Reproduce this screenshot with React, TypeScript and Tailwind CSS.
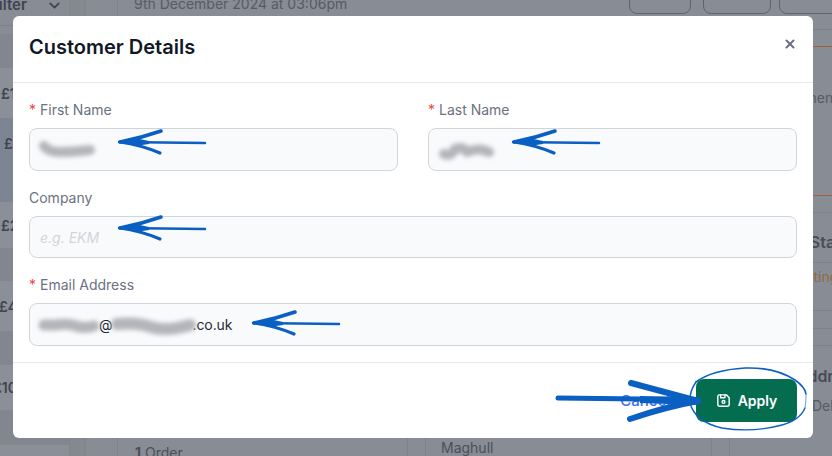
import React from 'react';
import { ChevronDown, X } from 'lucide-react';
import { TbDeviceFloppy } from 'react-icons/tb';

const Smudge = ({ d, width, height = 14, tone = '#b3b5ba', stroke = 8 }: { d: string; width: number; height?: number; tone?: string; stroke?: number }) => (
  <svg width={width} height={height} viewBox={`0 0 ${width} ${height}`} className="shrink-0 overflow-visible blur-[2px]">
    <path d={d} fill="none" stroke={tone} strokeWidth={stroke} strokeLinecap="round" strokeLinejoin="round" />
  </svg>
);

const Field = ({ label, required, height = 43, children }: { label: string; required?: boolean; height?: number; children: React.ReactNode }) => (
  <div className="flex flex-col">
    <label className="mb-[8px] h-[20px] text-[14px] leading-[20px] text-[#6b7280]">
      {required && <span className="mr-[4px] text-[#ef4444]">*</span>}
      {label}
    </label>
    <div style={{ height }} className="flex items-center rounded-[8px] border border-[#d1d5db] bg-[#f9fafb] px-[10px] text-[14px] text-[#1f2937]">
      {children}
    </div>
  </div>
);

const SmallArrow = ({ x, y }: { x: number; y: number }) => (
  <g transform={`translate(${x} ${y})`}>
    <path d="M0 0 L86 1" stroke="#0a5fc2" strokeWidth="2.4" strokeLinecap="round" fill="none" />
    <path d="M1 0 Q22 -4 42 -11" stroke="#0a5fc2" strokeWidth="3.6" strokeLinecap="round" fill="none" />
    <path d="M1 0 Q22 3 41 11" stroke="#0a5fc2" strokeWidth="3.2" strokeLinecap="round" fill="none" />
    <path d="M0 0 L16 -4 L30 -1 L30 2 L16 4 Z" fill="#0a5fc2" />
  </g>
);

const App = () => {
  return (
    <div className="relative flex h-[456px] w-[832px] overflow-hidden bg-[#888c94] font-['Inter',sans-serif]">
      {/* page behind the dialog */}
      <div className="flex w-[70px] shrink-0 flex-col border-r border-[#7f838b] text-[14px] font-semibold text-[#3f4450]">
        <div className="flex h-[26px] items-start justify-between overflow-hidden border-b border-[#7d8189] pr-[6px] leading-[10px]">
          <span className="-ml-[10px] whitespace-nowrap text-[15px]">Filter</span>
          <ChevronDown size={17} strokeWidth={2.5} className="-mt-[3px] text-[#3f4450]" />
        </div>
        <div className="h-[8px]" />
        <div className="h-[34px] bg-[#82868e]" />
        <div className="flex h-[50px] items-center overflow-hidden bg-[#8b8f97] pl-[1px]">£1</div>
        <div className="flex h-[84px] items-center overflow-hidden bg-[#7d8494] pb-[34px] pl-[4px]">£1</div>
        <div className="flex h-[46px] items-center overflow-hidden bg-[#8b8f97] pl-[1px]">£2</div>
        <div className="h-[33px] bg-[#82868e]" />
        <div className="flex h-[50px] items-center overflow-hidden bg-[#8b8f97] -ml-[1px]">£4</div>
        <div className="h-[34px] bg-[#82868e]" />
        <div className="flex h-[45px] items-center overflow-hidden bg-[#8b8f97] -ml-[7px]">£10</div>
        <div className="h-[35px] bg-[#82868e]" />
        <div className="flex-1 bg-[#8b8f97]" />
      </div>
      <div className="w-[16px] shrink-0 border-r border-[#7f838b] bg-[#85898f]" />
      <div className="w-[32px] shrink-0 border-r border-[#7f838b]" />
      <div className="flex min-w-0 flex-1 flex-col">
        <div className="flex h-[30px] shrink-0 justify-between border-b border-[#7d8189]">
          <span className="-mt-[6px] ml-[16px] whitespace-nowrap text-[14px] leading-[20px] text-[#565b66]">9th December 2024 at 03:06pm</span>
          <div className="-mr-[10px] -mt-[10px] flex h-[24px]">
            <div className="w-[62px] rounded-[8px] border border-[#5f636c]" />
            <div className="ml-[12px] w-[68px] rounded-[8px] border border-[#5f636c]" />
            <div className="ml-[8px] w-[63px] rounded-[8px] border border-[#5f636c]" />
          </div>
        </div>
        <div className="flex min-h-0 flex-1">
          <div className="w-[290px] shrink-0 border-r border-[#7f838b] pl-[17px] pt-[413px] text-[14px] leading-[20px] text-[#4b505b]">
            <span className="font-bold">1</span> Order
          </div>
          <div className="w-[17px] shrink-0" />
          <div className="w-[287px] shrink-0 border-x border-[#7f838b] pl-[15px] pt-[408px] text-[14px] leading-[20px] text-[#4b505b]">Maghull</div>
          <div className="w-[17px] shrink-0" />
          <div className="min-w-0 flex-1 overflow-hidden border-l border-[#7f838b] text-[14px] whitespace-nowrap">
            <div className="h-[17px] border-b border-[#a0613f]" />
            <div className="h-[149px] border-b border-[#a0613f] pl-[50px] pt-[41px] leading-[20px] text-[#565b66]">Payment</div>
            <div className="h-[17px] border-b border-[#7d8189]" />
            <div className="h-[50px] border-b border-[#7d8189] pl-[8px] pt-[19px] text-[16px] font-semibold leading-[20px] text-[#474c58]">Payment Status</div>
            <div className="h-[48px] border-b border-[#7d8189] pl-[52px] pt-[4px] leading-[20px] text-[#8b6d3f]">Awaiting</div>
            <div className="h-[18px] border-b border-[#7d8189]" />
            <div className="h-[17px] border-b border-[#7d8189]" />
            <div className="-ml-[2px] pt-[20px] text-[16px] font-semibold leading-[20px] text-[#474c58]">Delivery Address</div>
            <div className="pl-[82px] pt-[10px] leading-[20px] text-[#565b66]">Delivery</div>
          </div>
        </div>
      </div>

      {/* dialog */}
      <div className="absolute left-[13px] top-[16px] flex h-[422px] w-[800px] flex-col rounded-[6px] bg-white">
        <div className="flex h-[67px] shrink-0 items-start justify-between border-b border-[#e5e7eb] px-[16px]">
          <h2 className="mt-[17px] text-[20px] font-semibold leading-[28px] text-[#111827]">Customer Details</h2>
          <button className="mt-[21px] text-[#6b7280]">
            <X size={14} strokeWidth={3.5} />
          </button>
        </div>
        <div className="flex h-[280px] shrink-0 flex-col border-b border-[#e5e7eb] px-[16px] pt-[17px]">
          <div className="grid grid-cols-2 gap-x-[30px]">
            <Field label="First Name" required>
              <Smudge width={55} d="M4 3 Q8 9 20 9 T50 7" stroke={10} />
            </Field>
            <Field label="Last Name" required>
              <Smudge width={55} d="M5 11 Q12 14 16 6 Q24 3 28 9 Q40 4 50 9" stroke={10} />
            </Field>
          </div>
          <div className="mt-[17px]">
            <Field label="Company" height={42}>
              <input placeholder="e.g. EKM" className="w-full bg-transparent italic outline-none placeholder:text-[#d1d5db]" />
            </Field>
          </div>
          <div className="mt-[17px]">
            <Field label="Email Address" required>
              <Smudge width={59} d="M4 7 L15 7 Q28 5 36 8 T54 8" stroke={11} />
              <span>@</span>
              <Smudge width={81} d="M4 6 Q24 4 38 9 T77 7" stroke={12} />
              <span className="-ml-[1px] tracking-[-0.1px]">.co.uk</span>
            </Field>
          </div>
        </div>
        <div className="flex flex-1 items-start justify-end gap-[26px] px-[16px] pt-[16px]">
          <button className="mt-[12px] text-[15px] font-medium leading-[20px] text-[#3b6ff5]">Cancel</button>
          <button className="flex h-[43px] w-[101px] items-center justify-center gap-[6px] rounded-[8px] bg-[#056d4f] pr-[1px] text-[14px] font-semibold text-white">
            <TbDeviceFloppy size={17} />
            Apply
          </button>
        </div>
      </div>

      {/* hand drawn annotations */}
      <svg className="pointer-events-none absolute inset-0" width="832" height="456" viewBox="0 0 832 456">
        <SmallArrow x={119} y={142} />
        <SmallArrow x={513} y={142} />
        <SmallArrow x={119} y={228} />
        <SmallArrow x={253} y={323} />
        <path d="M558 398 L640 399" stroke="#0a5fc2" strokeWidth="5" strokeLinecap="round" fill="none" />
        <path d="M631 383 Q665 392 698 401" stroke="#0a5fc2" strokeWidth="6" strokeLinecap="round" fill="none" />
        <path d="M630 419 Q665 407 698 401" stroke="#0a5fc2" strokeWidth="6" strokeLinecap="round" fill="none" />
        <path d="M640 396 L698 397 L698 405 L640 403 Z" fill="#0a5fc2" />
        <path d="M696 382 Q689 392 690 403 Q695 422 722 428 Q752 433 782 425 Q800 420 805 408" stroke="#0a5fc2" strokeWidth="1.4" strokeLinecap="round" fill="none" />
        <path d="M696 382 Q712 370 745 368 Q775 367 795 380 Q805 387 806 394" stroke="#0a5fc2" strokeWidth="1.6" strokeLinecap="round" fill="none" />
        <path d="M806 394 Q806 403 805 408" stroke="#5b93e6" strokeWidth="0.9" fill="none" />
      </svg>
    </div>
  );
};

export default App;
